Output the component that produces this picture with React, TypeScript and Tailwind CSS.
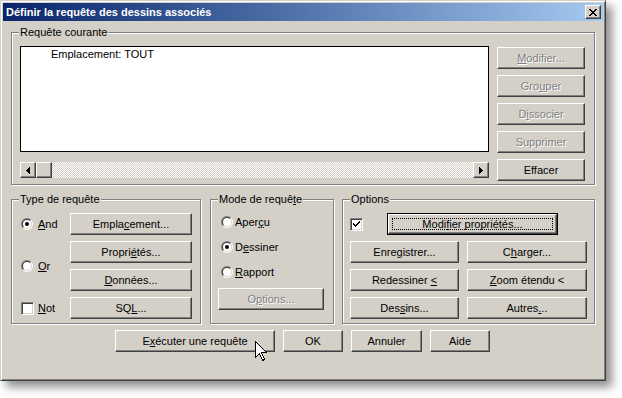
import React from "react";

// Windows 2000 style dialog: "Définir la requête des dessins associés"

const FONT = "font-['Liberation_Sans',Arial,sans-serif]";
const RAISED =
  "border border-t-white border-l-white border-r-[#404040] border-b-[#404040] shadow-[inset_-1px_-1px_0_#808080] bg-[#d4d0c8]";
const DISABLED = "text-[#808080] [text-shadow:1px_1px_0_#fff]";

// "&X" marks the accelerator letter, as in a Win32 resource file
function Mn({ text }: { text: string }) {
  const i = text.indexOf("&");
  if (i < 0) return <span className="whitespace-pre">{text}</span>;
  return (
    <span className="whitespace-pre">
      {text.slice(0, i)}
      <span className="underline decoration-1 underline-offset-[1px]">
        {text[i + 1]}
      </span>
      {text.slice(i + 2)}
    </span>
  );
}

function Btn({
  label,
  w,
  disabled,
}: {
  label: string;
  w: string;
  disabled?: boolean;
}) {
  return (
    <div
      className={`${RAISED} ${w} flex h-[22px] shrink-0 items-center justify-center text-[11px] leading-[13px] ${
        disabled ? DISABLED : "text-black"
      }`}
    >
      <Mn text={label} />
    </div>
  );
}

function DefaultBtn({ label, w }: { label: string; w: string }) {
  return (
    <div className={`${w} h-[22px] shrink-0 border border-black`}>
      <div
        className={`${RAISED} relative flex h-full w-full items-center justify-center text-[11px] leading-[13px] text-black`}
      >
        <span className="absolute inset-[3px] border border-dotted border-black" />
        <Mn text={label} />
      </div>
    </div>
  );
}

function Radio({ checked }: { checked?: boolean }) {
  return (
    <svg width="12" height="12" viewBox="0 0 12 12" className="shrink-0">
      <path d="M1.757 10.243 A6 6 0 0 1 10.243 1.757 Z" fill="#808080" />
      <path d="M10.243 1.757 A6 6 0 0 1 1.757 10.243 Z" fill="#ffffff" />
      <path d="M2.464 9.536 A5 5 0 0 1 9.536 2.464 Z" fill="#404040" />
      <path d="M9.536 2.464 A5 5 0 0 1 2.464 9.536 Z" fill="#d4d0c8" />
      <circle cx="6" cy="6" r="4" fill="#fff" />
      {checked && <circle cx="6" cy="6" r="2" fill="#000" />}
    </svg>
  );
}

function Check({ checked }: { checked?: boolean }) {
  return (
    <span className="flex h-[13px] w-[13px] shrink-0 items-center justify-center border border-t-[#808080] border-l-[#808080] border-r-white border-b-white bg-white shadow-[inset_1px_1px_0_#404040,inset_-1px_-1px_0_#d4d0c8]">
      {checked && (
        <svg width="7" height="7" viewBox="0 0 7 7">
          <path
            d="M0 2 L0 4 L2 6 L7 1 L7 -1 L2 4 Z"
            fill="#000"
            shapeRendering="crispEdges"
          />
        </svg>
      )}
    </span>
  );
}

function Group({
  title,
  className,
  children,
}: {
  title: string;
  className: string;
  children: React.ReactNode;
}) {
  return (
    <div
      className={`relative border border-[#808080] shadow-[1px_1px_0_#fff,inset_1px_1px_0_#fff] ${className}`}
    >
      <span className="absolute -top-[7px] left-[7px] bg-[#d4d0c8] px-[1px] text-[11px] leading-[13px] text-black">
        <Mn text={title} />
      </span>
      {children}
    </div>
  );
}

function ArrowBtn({ dir }: { dir: "left" | "right" }) {
  return (
    <div className={`${RAISED} flex h-[16px] w-[16px] shrink-0 items-center justify-center`}>
      <svg width="4" height="7" viewBox="0 0 4 7" shapeRendering="crispEdges">
        {dir === "left" ? (
          <path d="M4 0 V7 H3 V6 H2 V5 H1 V4 H0 V3 H1 V2 H2 V1 H3 V0 Z" fill="#000" />
        ) : (
          <path d="M0 0 V7 H1 V6 H2 V5 H3 V4 H4 V3 H3 V2 H2 V1 H1 V0 Z" fill="#000" />
        )}
      </svg>
    </div>
  );
}

function Cursor() {
  return (
    <svg
      width="12"
      height="21"
      viewBox="0 0 12 21"
      className="absolute left-[255px] top-[341px]"
      shapeRendering="crispEdges"
    >
      <path
        d="M0.5 0.5 V16.5 L4.5 12.5 L7.5 19.5 L9.5 18.5 L6.5 11.5 H11.5 Z"
        fill="#fff"
        stroke="#000"
        strokeWidth="1"
      />
    </svg>
  );
}

export default function App() {
  return (
    <div className={`relative h-[398px] w-[622px] overflow-hidden bg-white ${FONT}`}>
      <div className="flex h-[381px] w-[606px] flex-col border border-t-[#d4d0c8] border-l-[#d4d0c8] border-r-[#404040] border-b-[#404040] bg-[#d4d0c8] p-[2px] shadow-[inset_1px_1px_0_#fff,inset_-1px_-1px_0_#808080,6px_6px_9px_rgba(0,0,0,0.45)]">
        {/* title bar */}
        <div className="flex h-[18px] shrink-0 items-center justify-between bg-gradient-to-r from-[#0a246a] to-[#a6caf0] pl-[3px] pr-[2px]">
          <span className="text-[11px] font-bold leading-[13px] text-white">
            Définir la requête des dessins associés
          </span>
          <div className={`${RAISED} flex h-[14px] w-[16px] items-center justify-center`}>
            <svg width="8" height="7" viewBox="0 0 8 7" shapeRendering="crispEdges">
              <path
                d="M0 0 H2 V1 H3 V2 H5 V1 H6 V0 H8 V1 H7 V2 H6 V3 H5 V4 H6 V5 H7 V6 H8 V7 H6 V6 H5 V5 H3 V6 H2 V7 H0 V6 H1 V5 H2 V4 H3 V3 H2 V2 H1 V1 H0 Z"
                fill="#000"
              />
            </svg>
          </div>
        </div>

        {/* current request */}
        <Group title="Requête courante" className="ml-[8px] mt-[11px] h-[153px] w-[584px]">
          <div className="flex pl-[8px] pt-[13px]">
            <div className="flex w-[469px] flex-col">
              <div className="h-[106px] border border-black bg-white pl-[30px] pt-[1px] text-[11px] leading-[13px] text-black">
                Emplacement: TOUT
              </div>
              <div className="mt-[10px] flex h-[16px]">
                <ArrowBtn dir="left" />
                <div className={`${RAISED} h-[16px] w-[16px] shrink-0`} />
                <div className="flex-1 bg-[repeating-conic-gradient(#d4d0c8_0_25%,#fff_0_50%)] bg-[length:2px_2px]" />
                <ArrowBtn dir="right" />
              </div>
            </div>
            <div className="ml-[8px] mt-[1px] flex flex-col gap-[6px]">
              <Btn label="&Modifier..." w="w-[88px]" disabled />
              <Btn label="Gro&uper" w="w-[88px]" disabled />
              <Btn label="D&issocier" w="w-[88px]" disabled />
              <Btn label="Supprimer" w="w-[88px]" disabled />
              <Btn label="Effacer" w="w-[88px]" />
            </div>
          </div>
        </Group>

        {/* three option groups */}
        <div className="ml-[8px] mt-[14px] flex">
          <Group title="Type de requête" className="h-[125px] w-[190px]">
            <div className="flex pl-[9px] pt-[13px] text-[11px] leading-[13px] text-black">
              <div className="flex w-[49px] flex-col gap-[6px]">
                <div className="flex h-[22px] items-center gap-[5px]">
                  <Radio checked />
                  <Mn text="&And" />
                </div>
                <div className="flex h-[50px] items-center gap-[5px]">
                  <Radio />
                  <Mn text="&Or" />
                </div>
                <div className="flex h-[22px] items-center gap-[4px]">
                  <Check />
                  <Mn text="&Not" />
                </div>
              </div>
              <div className="flex flex-col gap-[6px]">
                <Btn label="Empla&cement..." w="w-[122px]" />
                <Btn label="Propri&étés..." w="w-[122px]" />
                <Btn label="&Données..." w="w-[122px]" />
                <Btn label="SQ&L..." w="w-[122px]" />
              </div>
            </div>
          </Group>

          <Group title="Mode de requê&te" className="ml-[9px] h-[125px] w-[124px]">
            <div className="flex flex-col pl-[7px] pt-[14px] text-[11px] leading-[13px] text-black">
              <div className="ml-[3px] flex flex-col gap-[9px]">
                <div className="flex h-[16px] items-center gap-[2px]">
                  <Radio />
                  <Mn text="Aper&çu" />
                </div>
                <div className="flex h-[16px] items-center gap-[2px]">
                  <Radio checked />
                  <Mn text="D&essiner" />
                </div>
                <div className="flex h-[16px] items-center gap-[2px]">
                  <Radio />
                  <Mn text="&Rapport" />
                </div>
              </div>
              <div className="mt-[8px]">
                <Btn label="O&ptions..." w="w-[106px]" disabled />
              </div>
            </div>
          </Group>

          <Group title="Options" className="ml-[8px] h-[125px] w-[253px]">
            <div className="flex flex-col gap-[6px] pl-[7px] pt-[13px]">
              <div className="flex h-[22px] items-center">
                <Check checked />
                <div className="ml-[24px]">
                  <DefaultBtn label="Modi&fier propriétés..." w="w-[171px]" />
                </div>
              </div>
              <div className="flex gap-[8px]">
                <Btn label="Enre&gistrer..." w="w-[109px]" />
                <Btn label="C&harger..." w="w-[120px]" />
              </div>
              <div className="flex gap-[8px]">
                <Btn label="Redessiner &<" w="w-[109px]" />
                <Btn label="&Zoom étendu <" w="w-[120px]" />
              </div>
              <div className="flex gap-[8px]">
                <Btn label="Des&sins..." w="w-[109px]" />
                <Btn label="Autres&..." w="w-[120px]" />
              </div>
            </div>
          </Group>
        </div>

        {/* dialog buttons */}
        <div className="mt-[6px] flex gap-[8px] pl-[112px]">
          <Btn label="E&xécuter une requête" w="w-[160px]" />
          <Btn label="OK" w="w-[60px]" />
          <Btn label="Annuler" w="w-[71px]" />
          <Btn label="Aide" w="w-[60px]" />
        </div>
      </div>
      <Cursor />
    </div>
  );
}
